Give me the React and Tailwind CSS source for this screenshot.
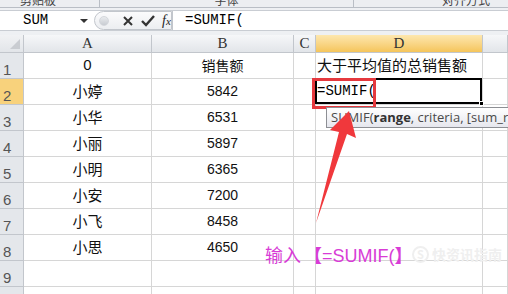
import React from 'react';

const rows = [
  ['0', '销售额', '', '大于平均值的总销售额'],
  ['小婷', '5842', '', '=SUMIF('],
  ['小华', '6531'],
  ['小丽', '5897'],
  ['小明', '6365'],
  ['小安', '7200'],
  ['小飞', '8458'],
  ['小思', '4650'],
  ['', ''],
  ['', ''],
];

const cols = ['A', 'B', 'C', 'D', ''];

const cjk = { fontFamily: '"Noto Sans CJK SC", sans-serif' };
const mono = { fontFamily: '"Liberation Mono", monospace' };

const ColHead = ({ label, active }) => (
  <div
    className={`h-[18px] flex items-center justify-center border-r border-b border-[#c2c6cc] text-[15px] text-[#333] ${
      active ? 'bg-gradient-to-b from-[#fde7ae] to-[#f5c55a]' : 'bg-gradient-to-b from-[#f6f7f9] to-[#e2e5e9]'
    }`}
    style={{ fontFamily: '"Liberation Serif", serif' }}
  >
    {label}
  </div>
);

const RowHead = ({ n, active }) => (
  <div
    className={`h-[26px] flex items-end pl-[3px] pb-[1px] border-r border-b border-[#c2c6cc] text-[15px] leading-none text-[#555] ${
      active ? 'bg-[#f8d27c]' : 'bg-[#e4e7eb]'
    }`}
    style={{ fontFamily: '"Liberation Sans", sans-serif' }}
  >
    {n}
  </div>
);

const Cell = ({ children, className = '', style }) => (
  <div className={`h-[26px] flex items-center border-r border-b border-[#d6d6d6] bg-white ${className}`} style={style}>
    {children}
  </div>
);

const isNum = (v) => /^\d+$/.test(v);

export default function App() {
  return (
    <div className="relative w-[508px] h-[294px] overflow-hidden bg-[#eef0f3]">
      {/* ribbon group labels, cut off */}
      <div className="h-[8px] overflow-hidden flex border-b border-[#b9bec5] bg-[#eceef1] text-[12px] text-[#444]" style={cjk}>
        <div className="w-[100px] border-r border-[#b9bec5] -mt-[9px] pl-[20px]">剪贴板</div>
        <div className="w-[254px] border-r border-[#b9bec5] -mt-[9px] text-center">字体</div>
        <div className="flex-1 -mt-[9px] text-right pr-[18px]">对齐方式</div>
      </div>

      {/* formula bar */}
      <div className="mt-[2px] h-[21px] flex items-stretch bg-white border-y border-[#c9cdd3]">
        <div className="w-[94px] flex items-center justify-between pl-[23px] pr-[6px] text-[14px]" style={mono}>
          <span>SUM</span>
          <span className="w-0 h-0 border-x-[4px] border-x-transparent border-t-[4px] border-t-[#333]" />
        </div>
        <div className="w-[78px] flex items-center gap-[7px] rounded-l-full border border-[#c2c6cc] bg-gradient-to-b from-[#fbfbfc] to-[#eceef1] pl-[4px]">
          <span className="w-[10px] h-[10px] rounded-full bg-gradient-to-b from-[#e9ebee] to-[#c8ccd2] border border-[#d4d7dc]" />
          <svg width="12" height="12" viewBox="0 0 12 12" className="ml-[6px]">
            <path d="M2 2 L10 10 M10 2 L2 10" stroke="#333" strokeWidth="2" />
          </svg>
          <svg width="14" height="12" viewBox="0 0 14 12">
            <path d="M1 6 L5 10 L13 1" stroke="#333" strokeWidth="2.4" fill="none" />
          </svg>
          <span className="text-[14px] italic text-[#222]" style={{ fontFamily: '"Liberation Serif", serif' }}>
            f<span className="text-[11px]">x</span>
          </span>
        </div>
        <div className="flex-1 flex items-center pl-[12px] text-[14px] border-l border-[#c2c6cc]" style={mono}>
          =SUMIF(
        </div>
      </div>

      {/* sheet */}
      <div className="mt-[4px] grid grid-cols-[24px_128px_142px_22px_167px_25px] bg-white">
        <div className="h-[18px] relative border-r border-b border-[#c2c6cc] bg-gradient-to-b from-[#f1f2f4] to-[#e2e5e9]">
          <span className="absolute right-[3px] bottom-[3px] w-0 h-0 border-l-[10px] border-l-transparent border-b-[10px] border-b-[#c9ccd1]" />
        </div>
        {cols.map((c, i) => (
          <ColHead key={i} label={c} active={c === 'D'} />
        ))}

        {rows.map((r, i) => (
          <React.Fragment key={i}>
            <RowHead n={i + 1} active={i === 1} />
            <Cell className="justify-center text-[15px] text-[#111]" style={isNum(r[0]) ? { fontFamily: '"Liberation Sans", sans-serif' } : cjk}>
              {r[0]}
            </Cell>
            <Cell className="justify-center text-[14px] text-[#111]" style={isNum(r[1]) ? { fontFamily: '"Liberation Sans", sans-serif' } : cjk}>
              {r[1]}
            </Cell>
            <Cell />
            {i === 1 ? (
              <Cell className="relative pl-[1px] text-[14px] text-black" style={mono}>
                <div className="absolute -left-[1px] -top-[1px] right-0 bottom-0 border-2 border-black" />
                <span className="absolute -right-[2px] -bottom-[2px] w-[5px] h-[5px] bg-black border border-white" />
                <span className="relative">{r[3]}</span>
              </Cell>
            ) : (
              <Cell className="text-[15px] text-[#111] pl-[1px]" style={cjk}>
                {r[3]}
              </Cell>
            )}
            <Cell />
          </React.Fragment>
        ))}
      </div>

      {/* red highlight box */}
      <div className="absolute left-[312px] top-[78px] w-[64px] h-[31px] border-[3px] border-[#e5393e]" />

      {/* function tooltip */}
      <div
        className="absolute left-[326px] top-[107px] h-[21px] pl-[4px] pr-[6px] flex items-center whitespace-nowrap border border-[#8d8f94] bg-gradient-to-b from-white to-[#e6e7ee] text-[13px] text-[#4a4a4a]"
        style={{ fontFamily: '"Open Sans", sans-serif' }}
      >
        SUMIF(<b className="text-[#333]">range</b>, criteria, [sum_range])
      </div>

      {/* red arrow */}
      <svg className="absolute left-0 top-0" width="508" height="294" viewBox="0 0 508 294">
        <polygon points="349,111 356,138 347,134 316,223 339,132 330,130" fill="#f0383c" />
      </svg>

      {/* annotation */}
      <div
        className="absolute left-[265px] top-[245px] text-[18px] leading-none text-[#d83cd6] whitespace-nowrap"
        style={{ fontFamily: '"Liberation Sans", "Noto Sans CJK SC", sans-serif' }}
      >
        <span style={cjk}>输入</span>
        <span className="ml-[3px] font-bold" style={cjk}>【</span>
        <span>=SUMIF(</span>
        <span className="font-bold" style={cjk}>】</span>
      </div>

      {/* faint watermark */}
      <div className="absolute left-[412px] top-[244px] flex items-center gap-[3px] text-[#efefef] text-[14px] font-bold" style={cjk}>
        <span className="w-[17px] h-[17px] rounded-full border-2 border-[#efefef] flex items-center justify-center text-[11px]">S</span>
        <span>快资讯指南</span>
      </div>
    </div>
  );
}
